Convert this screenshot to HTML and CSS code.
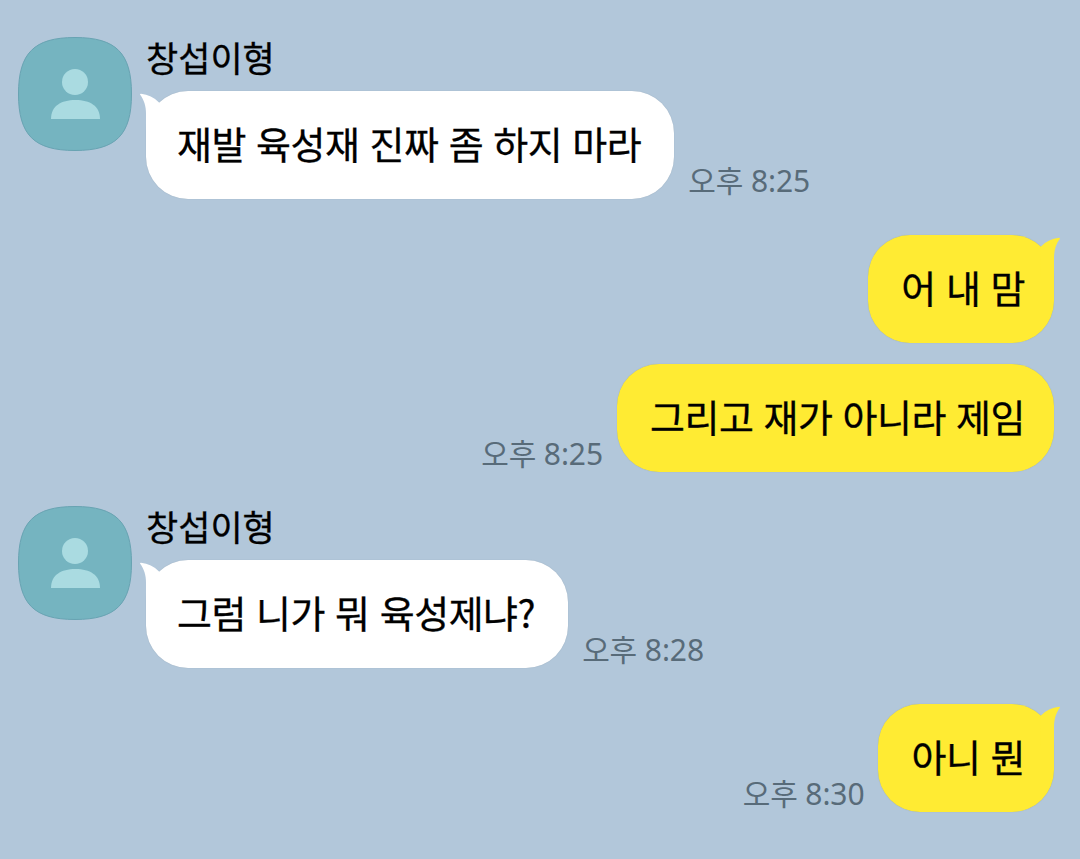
FILE: index.html
```
<!DOCTYPE html>
<html lang="ko">

<head>
    <meta charset="UTF-8" />
    <meta name="viewport" content="width=device-width, initial-scale=1.0" />
    <title>창섭이형</title>
    <link rel="stylesheet" href="styles.css">
</head>

<body>
    <svg class="defs">
        <symbol id="avatar" viewBox="0 0 114 114">
            <path d="M57 .5C98 .5 113.500 16 113.500 57S98 113.500 57 113.500 .5 98 .5 57 16 .5 57 .5Z" fill="#75b4c0" stroke="#68a3b2" />
            <circle cx="57" cy="45" r="13" fill="#aadbe1" />
            <path d="M33 82C33 69 43 63 57.500 63S82 69 82 82Z" fill="#aadbe1" />
        </symbol>
        <symbol id="tail" viewBox="0 0 20 42">
            <path d="M0 3.500Q0 2.700 1 2.800C8 3.500 14 6.500 19 11.500L20 42H6V23C6 15 4 9 0 3.500Z" />
        </symbol>
    </svg>

    <main class="chat">
        <div class="message">
            <svg class="avatar"><use href="#avatar" /></svg>
            <div class="content">
                <div class="name">창섭이형</div>
                <div class="line">
                    <div class="bubble"><svg class="tail"><use href="#tail" /></svg>재발 육성재 진짜 좀 하지 마라</div>
                    <time>오후 8:25</time>
                </div>
            </div>
        </div>

        <div class="message mine">
            <div class="line">
                <div class="bubble"><svg class="tail"><use href="#tail" /></svg>어 내 맘</div>
            </div>
            <div class="line">
                <time>오후 8:25</time>
                <div class="bubble">그리고 재가 아니라 제임</div>
            </div>
        </div>

        <div class="message">
            <svg class="avatar"><use href="#avatar" /></svg>
            <div class="content">
                <div class="name">창섭이형</div>
                <div class="line">
                    <div class="bubble"><svg class="tail"><use href="#tail" /></svg>그럼 니가 뭐 육성제냐?</div>
                    <time>오후 8:28</time>
                </div>
            </div>
        </div>

        <div class="message mine">
            <div class="line">
                <time>오후 8:30</time>
                <div class="bubble"><svg class="tail"><use href="#tail" /></svg>아니 뭔</div>
            </div>
        </div>
    </main>
</body>

</html>
```
FILE: styles.css
```
* {
    box-sizing: border-box;
}

body {
    margin: 0;
    background: #b2c7da;
    color: #000;
    font-family: "Noto Sans CJK KR", sans-serif;
}

.defs {
    display: none;
}

.chat {
    padding: 37px 26px 0 18px;
}

.message {
    display: flex;
    gap: 14px;
    margin-bottom: 36px;
}

.message.mine {
    flex-direction: column;
    gap: 21px;
    margin-bottom: 34px;
}

.avatar {
    width: 114px;
    height: 114px;
    flex: none;
}

.name {
    height: 54px;
    font-size: 35px;
    line-height: 39px;
    -webkit-text-stroke: 0.3px #000;
}

.line {
    display: flex;
    align-items: flex-end;
    gap: 14px;
}

.mine .line {
    justify-content: flex-end;
}

.bubble {
    position: relative;
    height: 108px;
    padding: 0 33px 0 31px;
    border-radius: 42px;
    background: #fff;
    box-shadow: 0 0 1px #8fa3b5;
    font-size: 38px;
    letter-spacing: -0.5px;
    line-height: 103px;
    white-space: nowrap;
    -webkit-text-stroke: 0.3px #000;
}

.mine .bubble {
    padding: 0 29px 0 33px;
    background: #ffeb33;
}

.tail {
    position: absolute;
    top: 0;
    left: -6px;
    width: 20px;
    height: 42px;
    fill: #fff;
}

.mine .tail {
    left: auto;
    right: -6px;
    fill: #ffeb33;
    transform: scaleX(-1);
}

time {
    color: #586b79;
    font-family: "Noto Sans", "Noto Sans CJK KR", sans-serif;
    font-size: 30px;
    letter-spacing: -0.1px;
    line-height: 36px;
    white-space: nowrap;
}
```
